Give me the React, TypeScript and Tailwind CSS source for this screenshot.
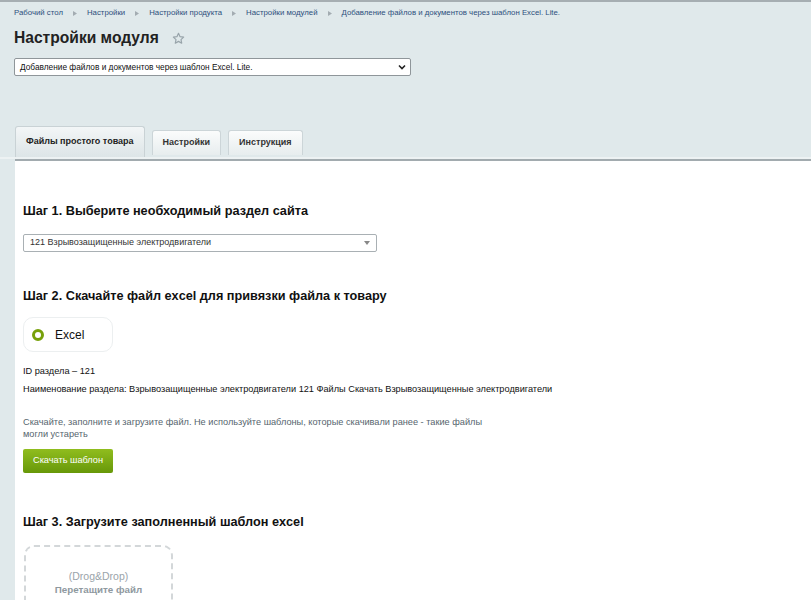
import type { ReactNode } from "react";

const crumbs = [
  "Рабочий стол",
  "Настройки",
  "Настройки продукта",
  "Настройки модулей",
  "Добавление файлов и документов через шаблон Excel. Lite.",
];

function Crumbs() {
  return (
    <div className="flex items-center h-[12px] text-[7.8px] text-[#2d4f7c]">
      {crumbs.map((c, i) => (
        <span key={c} className="flex items-center">
          {i > 0 && (
            <svg width="4" height="5" viewBox="0 0 4 5" className="mx-[10px]">
              <path d="M0 0L4 2.5L0 5Z" fill="#a3acb1" />
            </svg>
          )}
          {c}
        </span>
      ))}
    </div>
  );
}

function Tab({ active, children }: { active?: boolean; children: ReactNode }) {
  return (
    <div
      className={
        active
          ? "h-[31px] pl-[10px] pr-[10px] flex items-center rounded-t-[3px] border border-b-0 border-[#c9d2d5] bg-gradient-to-b from-[#f3f6f7] to-[#dde5e7] text-[9px] font-bold text-[#222]"
          : "h-[25px] mb-[2px] px-[10px] flex items-center rounded-t-[3px] border border-b-0 border-[#ccd5d8] bg-gradient-to-b from-[#fbfcfc] to-[#e7edee] text-[9px] font-bold text-[#333]"
      }
    >
      {children}
    </div>
  );
}

function Heading({ children, className }: { children: ReactNode; className: string }) {
  return (
    <h2 className={"text-[12.7px] leading-[16px] font-bold text-[#111] " + className}>
      {children}
    </h2>
  );
}

export default function App() {
  return (
    <div className="min-h-[600px] bg-[#e0e9eb] border-t-2 border-[#a6aeb2] overflow-hidden font-['Liberation_Sans',Arial,sans-serif]">
      <div className="pl-[14px] pt-[5px]">
        <Crumbs />
        <div className="mt-[8px] flex items-center h-[22px]">
          <h1 className="text-[15.6px] font-bold text-[#222]">Настройки модуля</h1>
          <svg width="13" height="13" viewBox="0 0 24 24" className="ml-[13px]">
            <path
              d="M12 2.5l2.9 6.1 6.6.8-4.9 4.6 1.3 6.6L12 17.3l-5.9 3.3 1.3-6.6-4.9-4.6 6.6-.8z"
              fill="none"
              stroke="#98a4aa"
              strokeWidth="2.2"
              strokeLinejoin="round"
            />
          </svg>
        </div>
        <div className="mt-[9px] w-[397px] h-[18px] bg-white border border-[#8f969a] rounded-[2px] flex items-center justify-between pl-[5px] pr-[4px] text-[8.3px] text-[#111]">
          <span>Добавление файлов и документов через шаблон Excel. Lite.</span>
          <svg width="8" height="6" viewBox="0 0 8 6">
            <path d="M1 1.5L4 4.5L7 1.5" fill="none" stroke="#222" strokeWidth="1.6" />
          </svg>
        </div>
      </div>

      <div className="mt-[50px] flex items-end gap-[7px] pl-[15px] border-b-[2px] border-[#edf2f3]">
        <Tab active>Файлы простого товара</Tab>
        <Tab>Настройки</Tab>
        <Tab>Инструкция</Tab>
      </div>

      <div className="ml-[15px] bg-white border-t-2 border-[#a2abaf] min-h-[441px] pl-[8px] pt-[42px]">
        <Heading className="">Шаг 1. Выберите необходимый раздел сайта</Heading>
        <div className="mt-[15px] w-[354px] h-[18px] border border-[#a9b0b4] rounded-[2px] flex items-center justify-between pl-[6px] pr-[6px] text-[9px] text-[#333]">
          <span>121 Взрывозащищенные электродвигатели</span>
          <svg width="6" height="4" viewBox="0 0 6 4">
            <path d="M0 0H6L3 4Z" fill="#888" />
          </svg>
        </div>

        <Heading className="mt-[36px]">Шаг 2. Скачайте файл excel для привязки файла к товару</Heading>
        <div className="mt-[13px] w-[90px] h-[35px] rounded-[10px] border border-[#eceff0] flex items-center pl-[8px] gap-[11px]">
          <span className="w-[12px] h-[12px] rounded-full border-[3px] border-[#77a00a]" />
          <span className="text-[12px] text-[#111]">Excel</span>
        </div>

        <p className="mt-[13px] text-[9.2px] leading-[12px] text-[#111]">ID раздела – 121</p>
        <p className="mt-[6px] text-[9.2px] leading-[12px] text-[#111]">
          Наименование раздела: Взрывозащищенные электродвигатели 121 Файлы Скачать Взрывозащищенные электродвигатели
        </p>

        <p className="mt-[21px] text-[9.2px] leading-[12px] text-[#56656e]">
          Скачайте, заполните и загрузите файл. Не используйте шаблоны, которые скачивали ранее - такие файлы
          <br />
          могли устареть
        </p>
        <button className="mt-[9px] w-[90px] h-[24px] rounded-[2px] bg-gradient-to-b from-[#90bd1e] to-[#679808] text-white text-[9.2px]">
          Скачать шаблон
        </button>

        <Heading className="mt-[41px]">Шаг 3. Загрузите заполненный шаблон excel</Heading>
        <div className="mt-[15px] ml-[1px] w-[149px] h-[100px] rounded-[10px] border-2 border-dashed border-[#d3d7d9] pt-[23px] flex flex-col items-center leading-[13px] text-[#9ba4aa]">
          <span className="text-[10.5px]">(Drog&amp;Drop)</span>
          <span className="text-[9.8px] font-semibold text-[#8f999f]">Перетащите файл</span>
        </div>
      </div>
    </div>
  );
}
